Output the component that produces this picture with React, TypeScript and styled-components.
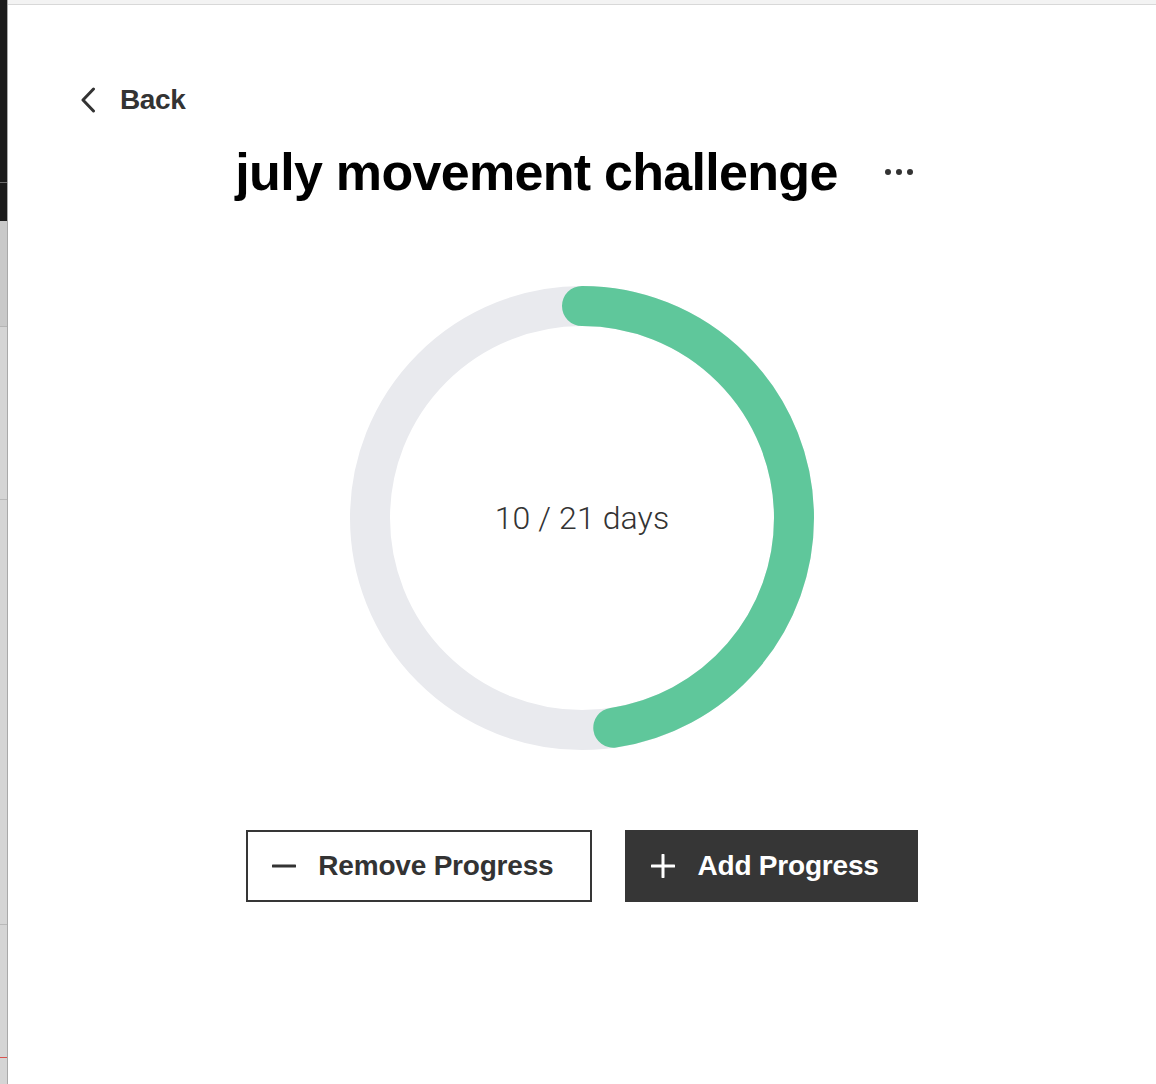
import React from "react";
import styled, { createGlobalStyle } from "styled-components";

const Global = createGlobalStyle`
  html, body { margin: 0; padding: 0; background: #fff; }
  body { font-family: "Liberation Sans", Arial, sans-serif; color: #333; }
`;

const Frame = styled.div`
  display: flex;
  width: 1156px;
  height: 1084px;
  overflow: hidden;
`;

const SideStrip = styled.div`
  width: 8px;
  flex: 0 0 8px;
  display: flex;
  flex-direction: column;
  border-right: 1px solid #a9a9a9;
  box-sizing: border-box;
`;

const StripPart = styled.div<{ $h?: number; $bg: string; $line?: string }>`
  ${(p) => (p.$h ? `height: ${p.$h}px; flex: 0 0 ${p.$h}px;` : "flex: 1;")}
  background: ${(p) => p.$bg};
  border-bottom: 1px solid ${(p) => p.$line || "transparent"};
  box-sizing: border-box;
`;

const Main = styled.main`
  flex: 1;
  display: flex;
  flex-direction: column;
  min-width: 0;
`;

const TopBar = styled.div`
  height: 5px;
  background: #f3f3f3;
  border-bottom: 1px solid #d8d8d8;
  box-sizing: border-box;
`;

const BackRow = styled.a`
  display: flex;
  align-items: center;
  gap: 24px;
  margin: 75px 0 0 72px;
  height: 40px;
  color: #333;
  text-decoration: none;
  font-weight: 700;
  font-size: 28px;
  letter-spacing: -0.4px;
  cursor: pointer;
  align-self: flex-start;
`;

const TitleRow = styled.div`
  display: flex;
  align-items: center;
  justify-content: center;
  gap: 47px;
  margin-top: 22px;
  height: 60px;
  padding-right: 16px;
`;

const Title = styled.h1`
  margin: 0;
  font-size: 52px;
  line-height: 60px;
  font-weight: 700;
  letter-spacing: -0.7px;
  color: #000;
`;

const MoreButton = styled.button`
  display: flex;
  gap: 5px;
  background: none;
  border: none;
  padding: 0;
  cursor: pointer;
`;

const Dot = styled.span`
  width: 6px;
  height: 6px;
  border-radius: 50%;
  background: #333;
`;

const RingWrap = styled.div`
  position: relative;
  width: 464px;
  height: 464px;
  margin: 84px auto 0;
  display: flex;
  align-items: center;
  justify-content: center;
`;

const RingSvg = styled.svg`
  position: absolute;
  inset: 0;
`;

const RingLabel = styled.div`
  position: relative;
  font-family: Roboto, "Liberation Sans", sans-serif;
  font-weight: 300;
  font-size: 32px;
  color: #333;
  letter-spacing: 0.1px;
`;

const Actions = styled.div`
  display: flex;
  justify-content: center;
  gap: 33px;
  margin-top: 80px;
`;

const ActionButton = styled.button<{ $primary?: boolean }>`
  display: flex;
  align-items: center;
  gap: 22px;
  height: 72px;
  padding: 0 37px 0 24px;
  box-sizing: border-box;
  border: 2px solid #363636;
  background: ${(p) => (p.$primary ? "#363636" : "#fff")};
  color: ${(p) => (p.$primary ? "#fff" : "#333")};
  font-family: "Liberation Sans", Arial, sans-serif;
  font-weight: 700;
  font-size: 28px;
  letter-spacing: -0.2px;
  cursor: pointer;
`;

const R = 212;
const C = 2 * Math.PI * R;

function Ring({ value, total }: { value: number; total: number }) {
  const len = (value / total) * C;
  return (
    <RingWrap>
      <RingSvg width="464" height="464" viewBox="0 0 464 464">
        <circle cx="232" cy="232" r={R} fill="none" stroke="#e9eaee" strokeWidth="40" />
        <circle
          cx="232"
          cy="232"
          r={R}
          fill="none"
          stroke="#5fc79b"
          strokeWidth="40"
          strokeLinecap="round"
          strokeDasharray={`${len} ${C}`}
          transform="rotate(-90 232 232)"
        />
      </RingSvg>
      <RingLabel>
        {value} / {total} days
      </RingLabel>
    </RingWrap>
  );
}

export default function App() {
  return (
    <>
      <Global />
      <Frame>
        <SideStrip>
          <StripPart $h={183} $bg="#1b1b1b" $line="#6d6d6d" />
          <StripPart $h={38} $bg="#1b1b1b" />
          <StripPart $h={106} $bg="#c9c9c9" $line="#b5b5b5" />
          <StripPart $h={173} $bg="#d5d5d5" $line="#b9b9b9" />
          <StripPart $h={425} $bg="#d5d5d5" $line="#b9b9b9" />
          <StripPart $h={133} $bg="#d5d5d5" $line="#d9534f" />
          <StripPart $bg="#d5d5d5" />
        </SideStrip>
        <Main>
          <TopBar />
          <BackRow>
            <svg width="16" height="26" viewBox="0 0 16 26" fill="none">
              <path d="M13.5 2 L3 13 L13.5 24" stroke="#333" strokeWidth="3" strokeLinecap="round" strokeLinejoin="round" />
            </svg>
            Back
          </BackRow>
          <TitleRow>
            <Title>july movement challenge</Title>
            <MoreButton aria-label="More">
              <Dot />
              <Dot />
              <Dot />
            </MoreButton>
          </TitleRow>
          <Ring value={10} total={21} />
          <Actions>
            <ActionButton>
              <svg width="24" height="24" viewBox="0 0 24 24">
                <path d="M1 12 H23" stroke="#333" strokeWidth="3" strokeLinecap="round" />
              </svg>
              Remove Progress
            </ActionButton>
            <ActionButton $primary>
              <svg width="24" height="24" viewBox="0 0 24 24">
                <path d="M1 12 H23 M12 1 V23" stroke="#fff" strokeWidth="3" strokeLinecap="round" />
              </svg>
              Add Progress
            </ActionButton>
          </Actions>
        </Main>
      </Frame>
    </>
  );
}
